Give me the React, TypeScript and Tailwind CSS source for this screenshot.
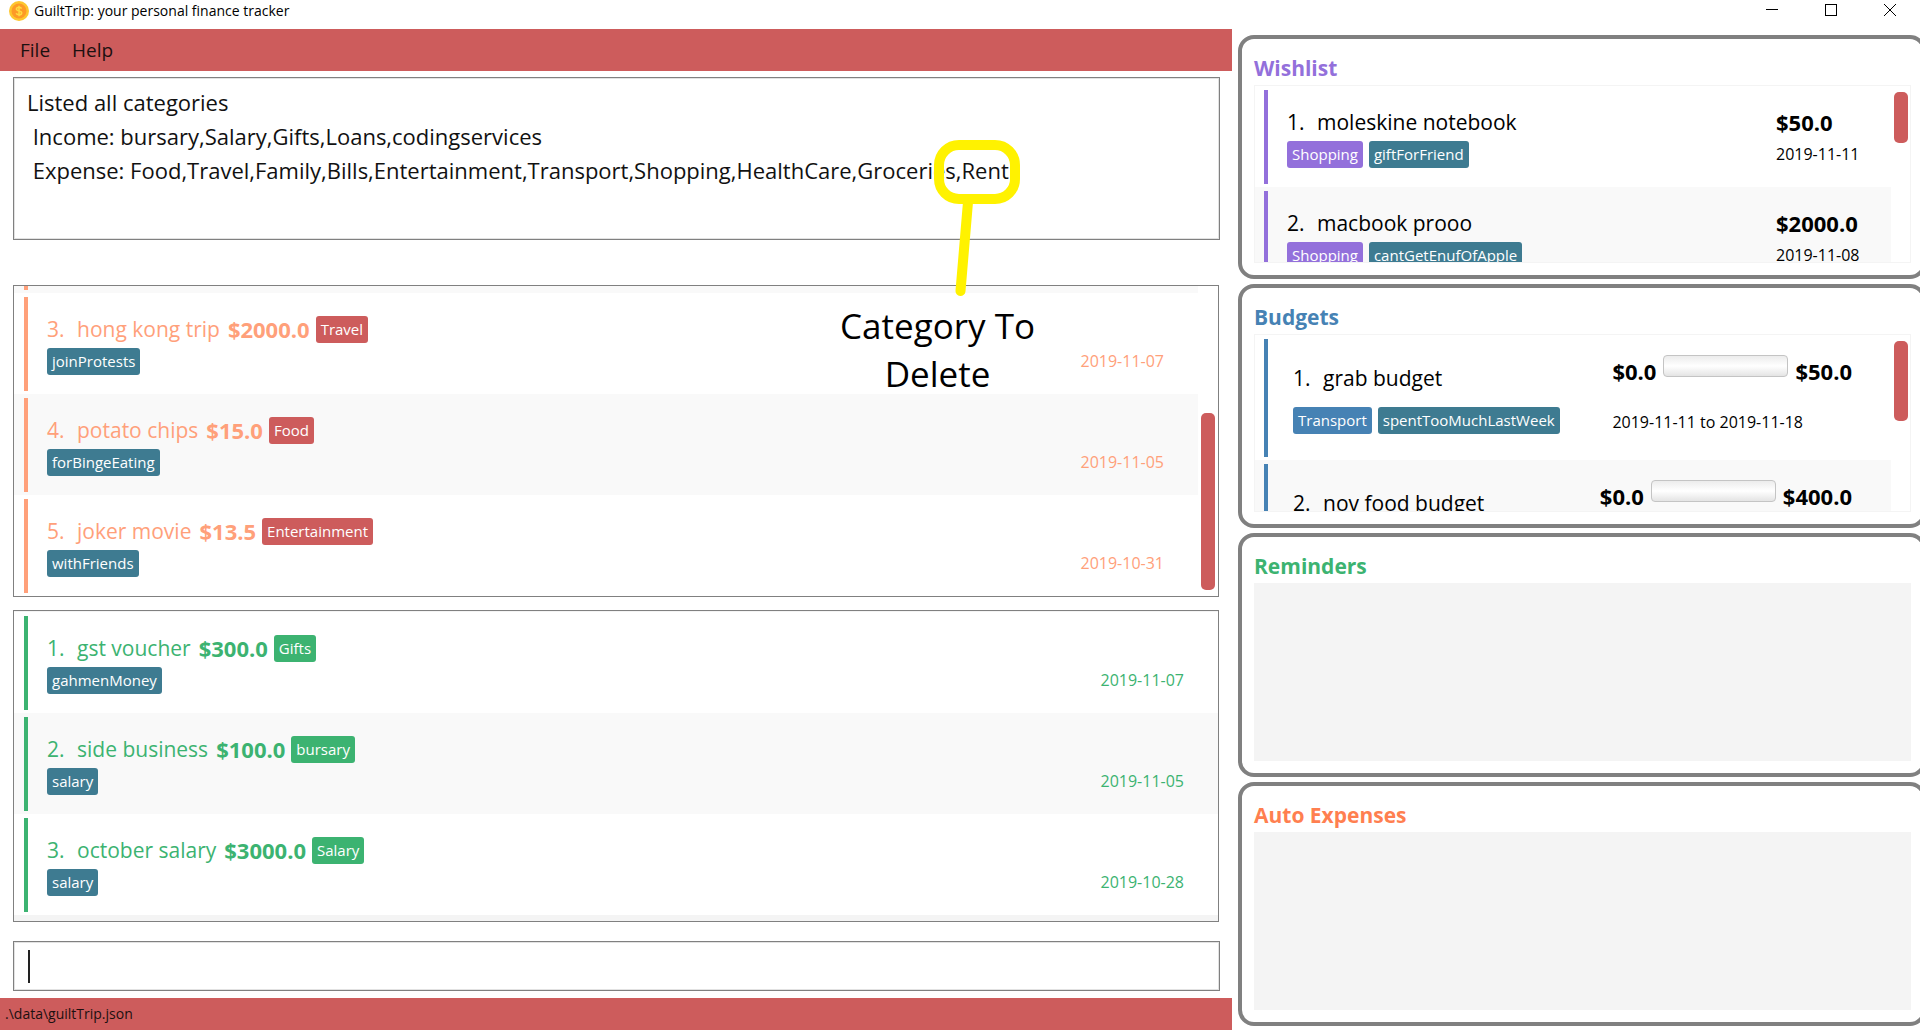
import React from "react";

type Entry = { id: number; name: string; amount: string; category: string; tag: string; date: string };
type Budget = { id: number; name: string; amount: string; tags?: [string, string]; period?: string };

const expenses: Entry[] = [
  { id: 3, name: "hong kong trip", amount: "$2000.0", category: "Travel", tag: "joinProtests", date: "2019-11-07" },
  { id: 4, name: "potato chips", amount: "$15.0", category: "Food", tag: "forBingeEating", date: "2019-11-05" },
  { id: 5, name: "joker movie", amount: "$13.5", category: "Entertainment", tag: "withFriends", date: "2019-10-31" },
];

const incomes: Entry[] = [
  { id: 1, name: "gst voucher", amount: "$300.0", category: "Gifts", tag: "gahmenMoney", date: "2019-11-07" },
  { id: 2, name: "side business", amount: "$100.0", category: "bursary", tag: "salary", date: "2019-11-05" },
  { id: 3, name: "october salary", amount: "$3000.0", category: "Salary", tag: "salary", date: "2019-10-28" },
];

const wishes: Entry[] = [
  { id: 1, name: "moleskine notebook", amount: "$50.0", category: "Shopping", tag: "giftForFriend", date: "2019-11-11" },
  { id: 2, name: "macbook prooo", amount: "$2000.0", category: "Shopping", tag: "cantGetEnufOfApple", date: "2019-11-08" },
];

const budgets: Budget[] = [
  { id: 1, name: "grab budget", amount: "$50.0", tags: ["Transport", "spentTooMuchLastWeek"], period: "2019-11-11 to 2019-11-18" },
  { id: 2, name: "nov food budget", amount: "$400.0" },
];

const resultText = `Listed all categories
 Income: bursary,Salary,Gifts,Loans,codingservices
 Expense: Food,Travel,Family,Bills,Entertainment,Transport,Shopping,HealthCare,Groceries,Rent`;

function Tag({ color, children }: { color: string; children: React.ReactNode }) {
  return (
    <span className={`h-[27px] shrink-0 rounded-[3px] px-[5px] text-[15px] leading-[27px] whitespace-nowrap text-white ${color}`}>
      {children}
    </span>
  );
}

function Thumb({ size }: { size: string }) {
  return <div className={`w-[14px] shrink-0 rounded-[5px] bg-[#cd5c5c] ${size}`} />;
}

function EntryRow({ entry, tone, bar, tagColor }: { entry: Entry; tone: string; bar: string; tagColor: string }) {
  return (
    <li className={`flex h-[101px] shrink-0 pt-1 pb-[3px] pl-[10px] ${entry.id % 2 ? "bg-white" : "bg-[#f9f9f9]"}`}>
      <div className={`flex flex-1 flex-col gap-[5px] border-l-4 pt-[19px] pr-[34px] pl-[19px] ${bar} ${tone}`}>
        <div className="flex items-center text-[21px] leading-[27px]">
          <span className="w-[30px]">{entry.id}.</span>
          <span className="mr-2">{entry.name}</span>
          <span className="mr-[6px] text-[22px] font-bold">{entry.amount}</span>
          <Tag color={tagColor}>{entry.category}</Tag>
        </div>
        <div className="flex items-center justify-between">
          <Tag color="bg-[#3e7b91]">{entry.tag}</Tag>
          <span className="text-base leading-[27px] whitespace-nowrap">{entry.date}</span>
        </div>
      </div>
    </li>
  );
}

function WishRow({ entry }: { entry: Entry }) {
  return (
    <li className={`flex h-[101px] shrink-0 pt-1 pb-[3px] pl-[9px] ${entry.id % 2 ? "bg-white" : "bg-[#f9f9f9]"}`}>
      <div className="flex flex-1 justify-between border-l-4 border-[#9370db] pt-[19px] pr-8 pl-[19px]">
        <div className="flex flex-col gap-[5px]">
          <div className="flex text-[21px] leading-[27px]">
            <span className="w-[30px]">{entry.id}.</span>
            <span>{entry.name}</span>
          </div>
          <div className="flex gap-[6px]">
            <Tag color="bg-[#9370db]">{entry.category}</Tag>
            <Tag color="bg-[#3e7b91]">{entry.tag}</Tag>
          </div>
        </div>
        <div className="flex w-[83px] flex-col gap-[5px] whitespace-nowrap">
          <span className="text-[22px] leading-[27px] font-bold">{entry.amount}</span>
          <span className="text-base leading-[27px]">{entry.date}</span>
        </div>
      </div>
    </li>
  );
}

function BudgetRow({ entry }: { entry: Budget }) {
  return (
    <li className={`flex h-[125px] shrink-0 pt-1 pb-[3px] pl-[9px] ${entry.id % 2 ? "bg-white" : "bg-[#f9f9f9]"}`}>
      <div className="flex flex-1 justify-between border-l-4 border-[#4682b4] pr-[39px] pl-[25px]">
        <div className="flex flex-col gap-[15px] pt-[26px]">
          <div className="flex text-[21px] leading-[27px]">
            <span className="w-[30px]">{entry.id}.</span>
            <span>{entry.name}</span>
          </div>
          {entry.tags && (
            <div className="flex gap-[6px]">
              <Tag color="bg-[#4682b4]">{entry.tags[0]}</Tag>
              <Tag color="bg-[#3e7b91]">{entry.tags[1]}</Tag>
            </div>
          )}
        </div>
        <div className="flex flex-col gap-[22px] pt-4 whitespace-nowrap">
          <div className="flex gap-[7px] text-[22px] leading-8 font-bold">
            <span>$0.0</span>
            <div
              role="progressbar"
              aria-label={`${entry.name} spent`}
              aria-valuenow={0}
              className="h-[22px] w-[125px] rounded-[4px] border border-[#c4c4c4] bg-linear-to-b from-[#ececec] via-white to-[#e4e4e4]"
            />
            <span>{entry.amount}</span>
          </div>
          {entry.period && <span className="text-base leading-[27px]">{entry.period}</span>}
        </div>
      </div>
    </li>
  );
}

function Panel({ title, tone, children, thumb }: { title: string; tone: string; children?: React.ReactNode; thumb?: string }) {
  return (
    <section className="flex min-h-0 flex-1 flex-col rounded-2xl border-4 border-[#808080] bg-white pr-[11px] pb-3 pl-3">
      <h2 className={`pt-3 text-[21px] leading-[34px] font-bold ${tone}`}>{title}</h2>
      {children ? (
        <div className="flex min-h-0 flex-1 overflow-hidden border border-[#f4f4f4]">
          <ul className="flex min-w-0 flex-1 flex-col">{children}</ul>
          <div className="flex w-[19px] justify-center pt-[6px]">
            <Thumb size={thumb ?? "h-12"} />
          </div>
        </div>
      ) : (
        <div className="flex-1 bg-[#f4f4f4]" />
      )}
    </section>
  );
}

function Coin() {
  return (
    <svg width="20" height="20" viewBox="0 0 20 20" aria-hidden="true">
      <circle cx="10" cy="10" r="10" fill="#fdc62e" />
      <circle cx="10" cy="10" r="7.5" fill="#fd9a27" />
      <path
        d="M12.6 7.6C12.2 6.7 11.2 6.3 10 6.3c-1.5 0-2.6.7-2.6 1.8 0 2.6 5.3 1.2 5.3 3.8 0 1.1-1.2 1.8-2.7 1.8-1.4 0-2.4-.5-2.8-1.5M10 4.8v10.4"
        fill="none"
        stroke="#fedb41"
        strokeWidth="1.5"
      />
    </svg>
  );
}

function TitleBar() {
  return (
    <header className="flex h-[29px] shrink-0 items-start justify-between bg-white">
      <div className="flex items-center gap-[5px] pl-[9px]">
        <Coin />
        <h1 className="text-[14px] leading-[21px]">GuiltTrip: your personal finance tracker</h1>
      </div>
      <div className="flex gap-[35px] pr-[18px]">
        <button aria-label="Minimize" className="flex h-5 w-6 items-center justify-center">
          <svg width="14" height="14" viewBox="0 0 14 14">
            <path d="M1 6.5h12" stroke="#000" />
          </svg>
        </button>
        <button aria-label="Maximize" className="flex h-5 w-6 items-center justify-center">
          <svg width="14" height="14" viewBox="0 0 14 14">
            <rect x="1.5" y="1.5" width="11" height="11" fill="none" stroke="#000" />
          </svg>
        </button>
        <button aria-label="Close" className="flex h-5 w-6 items-center justify-center">
          <svg width="14" height="14" viewBox="0 0 14 14">
            <path d="M1 1l12 12M13 1L1 13" stroke="#000" />
          </svg>
        </button>
      </div>
    </header>
  );
}

function Annotation() {
  return (
    <div className="pointer-events-none absolute top-[140px] left-[840px] w-[195px]">
      <svg width="195" height="162" viewBox="0 0 195 162" aria-hidden="true">
        <rect x="99" y="5" width="76" height="54" rx="20" fill="none" stroke="#fff200" strokeWidth="10" />
        <path d="M128 62L120.5 151" stroke="#fff200" strokeWidth="10" strokeLinecap="round" />
      </svg>
      <p className="text-center text-[35px] leading-[48px] whitespace-nowrap text-black">
        Category To
        <br />
        Delete
      </p>
    </div>
  );
}

export default function App() {
  return (
    <div className="relative flex h-screen flex-col overflow-hidden bg-white font-['Open_Sans','Noto_Sans',sans-serif] text-black">
      <TitleBar />
      <main className="grid min-h-0 flex-1 grid-cols-[1232fr_688fr]">
        <div className="flex min-h-0 min-w-0 flex-col">
          <nav className="flex h-[42px] shrink-0 items-center gap-[22px] bg-[#cd5c5c] pl-5 text-[19px] text-[#1c1010]">
            <button>File</button>
            <button>Help</button>
          </nav>
          <textarea
            readOnly
            aria-label="Result"
            value={resultText}
            className="mt-[6px] mr-3 ml-[13px] block h-[163px] shrink-0 resize-none overflow-hidden border border-[#808080] px-[13px] pt-[7px] text-[22px] leading-[34px] text-[#111111] shadow-[inset_0_0_0_1px_#e2e2e2] outline-none"
          />
          <div className="mt-[45px] mr-[13px] ml-[13px] flex min-h-0 flex-1 border border-[#808080]">
            <ul className="flex min-w-0 flex-1 flex-col justify-end">
              <li className="flex flex-1 bg-[#f9f9f9] pb-[3px] pl-[10px]">
                <div className="border-l-4 border-[#ffa07a]" />
              </li>
              {expenses.map((e) => (
                <EntryRow key={e.id} entry={e} tone="text-[#ffa07a]" bar="border-[#ffa07a]" tagColor="bg-[#cd5c5c]" />
              ))}
            </ul>
            <div className="flex w-5 flex-col items-center justify-end pb-[6px]">
              <Thumb size="h-[58%]" />
            </div>
          </div>
          <ul className="mt-[13px] mr-[13px] ml-[13px] flex min-h-0 flex-1 flex-col border border-[#808080] bg-[#f4f4f4] pt-px">
            {incomes.map((e) => (
              <EntryRow key={e.id} entry={e} tone="text-[#3cb371]" bar="border-[#3cb371]" tagColor="bg-[#3cb371]" />
            ))}
          </ul>
          <div className="relative mt-[19px] mr-3 mb-[7px] ml-[13px] flex h-[50px] shrink-0">
            <input
              aria-label="Command"
              className="w-full border border-[#808080] px-4 text-[21px] shadow-[inset_0_0_0_1px_#e2e2e2] outline-none"
            />
            <span className="absolute top-[9px] left-[15px] h-[33px] w-[2px] bg-[#222222]" />
          </div>
          <footer className="h-8 shrink-0 bg-[#cd5c5c] pl-[5px] text-[14px] leading-8 text-[#1c1010]">
            .\data\guiltTrip.json
          </footer>
        </div>
        <aside className="-mr-[6px] flex min-h-0 min-w-0 flex-col gap-[5px] pt-[6px] pb-1 pl-[6px]">
          <Panel title="Wishlist" tone="text-[#9370db]" thumb="h-[51px]">
            {wishes.map((w) => (
              <WishRow key={w.id} entry={w} />
            ))}
          </Panel>
          <Panel title="Budgets" tone="text-[#4682b4]" thumb="h-[80px]">
            {budgets.map((b) => (
              <BudgetRow key={b.id} entry={b} />
            ))}
          </Panel>
          <Panel title="Reminders" tone="text-[#3cb371]" />
          <Panel title="Auto Expenses" tone="text-[#ff7f50]" />
        </aside>
      </main>
      <Annotation />
    </div>
  );
}
